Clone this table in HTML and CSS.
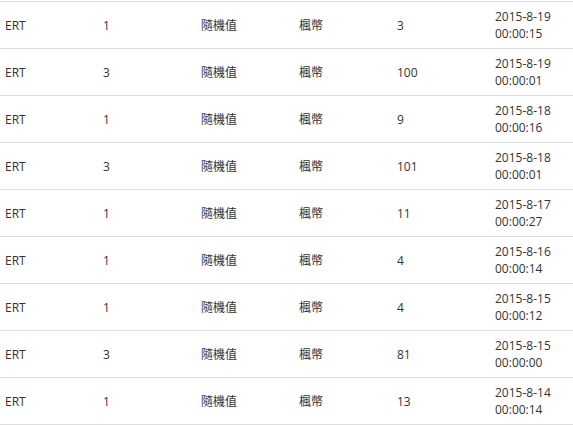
FILE: index.html
```html
<!DOCTYPE html>
<html lang="zh-Hant">
<head>
<meta charset="utf-8">
<link rel="stylesheet" href="styles.css">
</head>
<body>
<table class="log-table">
<colgroup>
<col class="c"><col class="c"><col class="c"><col class="c"><col class="c"><col>
</colgroup>
<tbody>
<tr><td>ERT</td><td>1</td><td>隨機值</td><td>楓幣</td><td>3</td><td>2015-8-19 00:00:15</td></tr>
<tr><td>ERT</td><td>3</td><td>隨機值</td><td>楓幣</td><td>100</td><td>2015-8-19 00:00:01</td></tr>
<tr><td>ERT</td><td>1</td><td>隨機值</td><td>楓幣</td><td>9</td><td>2015-8-18 00:00:16</td></tr>
<tr><td>ERT</td><td>3</td><td>隨機值</td><td>楓幣</td><td>101</td><td>2015-8-18 00:00:01</td></tr>
<tr><td>ERT</td><td>1</td><td>隨機值</td><td>楓幣</td><td>11</td><td>2015-8-17 00:00:27</td></tr>
<tr><td>ERT</td><td>1</td><td>隨機值</td><td>楓幣</td><td>4</td><td>2015-8-16 00:00:14</td></tr>
<tr><td>ERT</td><td>1</td><td>隨機值</td><td>楓幣</td><td>4</td><td>2015-8-15 00:00:12</td></tr>
<tr><td>ERT</td><td>3</td><td>隨機值</td><td>楓幣</td><td>81</td><td>2015-8-15 00:00:00</td></tr>
<tr><td>ERT</td><td>1</td><td>隨機值</td><td>楓幣</td><td>13</td><td>2015-8-14 00:00:14</td></tr>
</tbody>
</table>
</body>
</html>
```

FILE: styles.css
```css
html, body {
  margin: 0;
  padding: 0;
  background: #fff;
}
body {
  padding-top: 1px;
  font-family: "Open Sans", "Noto Sans CJK TC", sans-serif;
  font-size: 12px;
  line-height: 17px;
  color: #333;
}
.log-table {
  width: 573px;
  table-layout: fixed;
  border-collapse: collapse;
  border-spacing: 0;
}
.log-table col.c {
  width: 98px;
}
.log-table td {
  padding: 6px 5px;
  border-top: 1px solid #ddd;
  vertical-align: middle;
  text-align: left;
}
.log-table tr:last-child td {
  border-bottom: 1px solid #ddd;
}
```
